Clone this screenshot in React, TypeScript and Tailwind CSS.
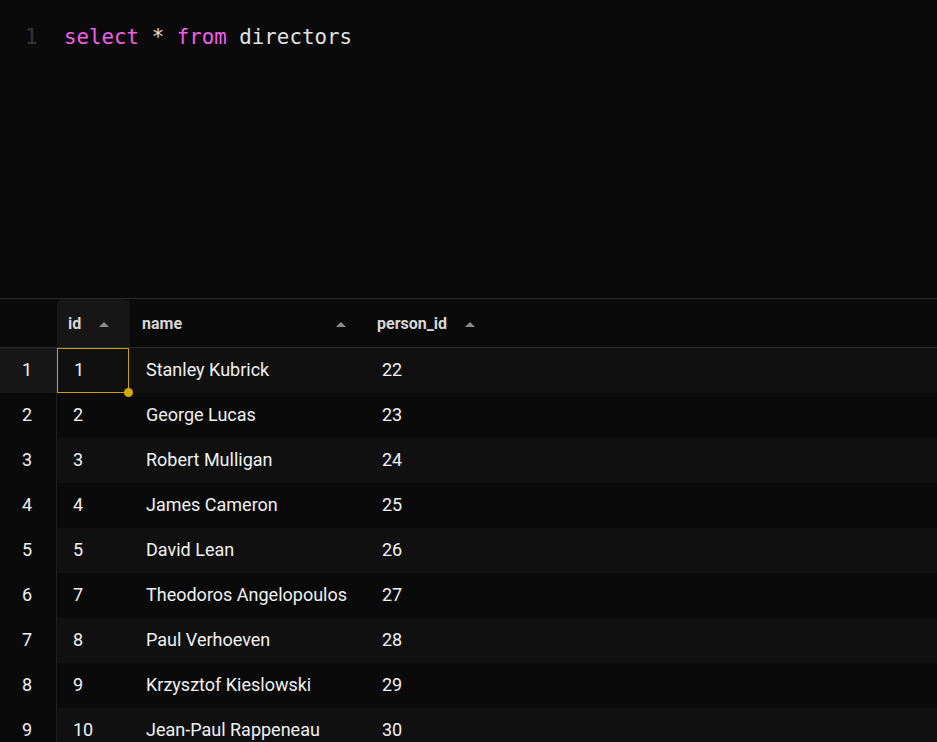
const rows = [
  { id: 1, name: "Stanley Kubrick", person_id: 22 },
  { id: 2, name: "George Lucas", person_id: 23 },
  { id: 3, name: "Robert Mulligan", person_id: 24 },
  { id: 4, name: "James Cameron", person_id: 25 },
  { id: 5, name: "David Lean", person_id: 26 },
  { id: 7, name: "Theodoros Angelopoulos", person_id: 27 },
  { id: 8, name: "Paul Verhoeven", person_id: 28 },
  { id: 9, name: "Krzysztof Kieslowski", person_id: 29 },
  { id: 10, name: "Jean-Paul Rappeneau", person_id: 30 },
];

function SortArrow() {
  return (
    <svg width="12" height="7" viewBox="0 0 12 7" className="shrink-0">
      <path d="M6 1 L11 6 L1 6 Z" fill="#8a8a8a" />
    </svg>
  );
}

export default function App() {
  return (
    <div className="h-[742px] w-[937px] overflow-hidden bg-[#0a0a0a] font-['Roboto',sans-serif]">
      {/* Editor */}
      <div className="h-[299px] border-b border-[#2a2a2a] pt-[25px] font-['DejaVu_Sans_Mono',monospace] text-[20.8px] leading-[24px]">
        <div className="flex">
          <span className="w-[64px] pl-[25px] text-[#363636]">1</span>
          <span className="whitespace-pre">
            <span className="text-[#f45ee8]">select</span>
            <span className="text-[#e2e2e2]"> * </span>
            <span className="text-[#f45ee8]">from</span>
            <span className="text-[#e2e2e2]"> directors</span>
          </span>
        </div>
      </div>

      {/* Header */}
      <div className="flex h-[49px] border-b border-[#2a2a2a] pt-[2px] text-[16px] font-bold text-[#d6d6d6]">
        <div className="w-[57px]" />
        <div className="-mt-[2px] flex w-[73px] items-center gap-[17px] rounded-t-[6px] bg-[#161616] pl-[11px] pt-[2px]">
          <span>id</span>
          <SortArrow />
        </div>
        <div className="flex w-[234px] items-center justify-between pl-[12px] pr-[17px]">
          <span>name</span>
          <SortArrow />
        </div>
        <div className="flex items-center gap-[17px] pl-[13px]">
          <span>person_id</span>
          <SortArrow />
        </div>
      </div>

      {/* Rows */}
      <div className="text-[18px] text-[#f0f0f0]">
        {rows.map((r, i) => {
          const selected = i === 0;
          const odd = i % 2 === 0;
          return (
            <div key={r.id} className="flex h-[45px]">
              <div
                className={`flex w-[57px] items-center justify-center border-r border-[#1e1e1e] pb-[2px] pr-[2px] ${
                  selected ? "bg-[#171717]" : "bg-[#0a0a0a]"
                }`}
              >
                {i + 1}
              </div>
              <div className={`flex flex-1 pb-[2px] ${odd ? "bg-[#101010]" : "bg-[#0a0a0a]"}`}>
                <div
                  className={`relative flex w-[72px] items-center pl-[16px] ${
                    selected ? "-mb-[2px] border border-[#c9a200] pb-[2px] pl-[15px]" : ""
                  }`}
                >
                  {r.id}
                  {selected && (
                    <span className="absolute -bottom-[5px] -right-[5px] h-[9px] w-[9px] rounded-full bg-[#d4aa00]" />
                  )}
                </div>
                <div className="flex w-[234px] items-center pl-[17px]">{r.name}</div>
                <div className="flex items-center pl-[19px]">{r.person_id}</div>
              </div>
            </div>
          );
        })}
      </div>
    </div>
  );
}
